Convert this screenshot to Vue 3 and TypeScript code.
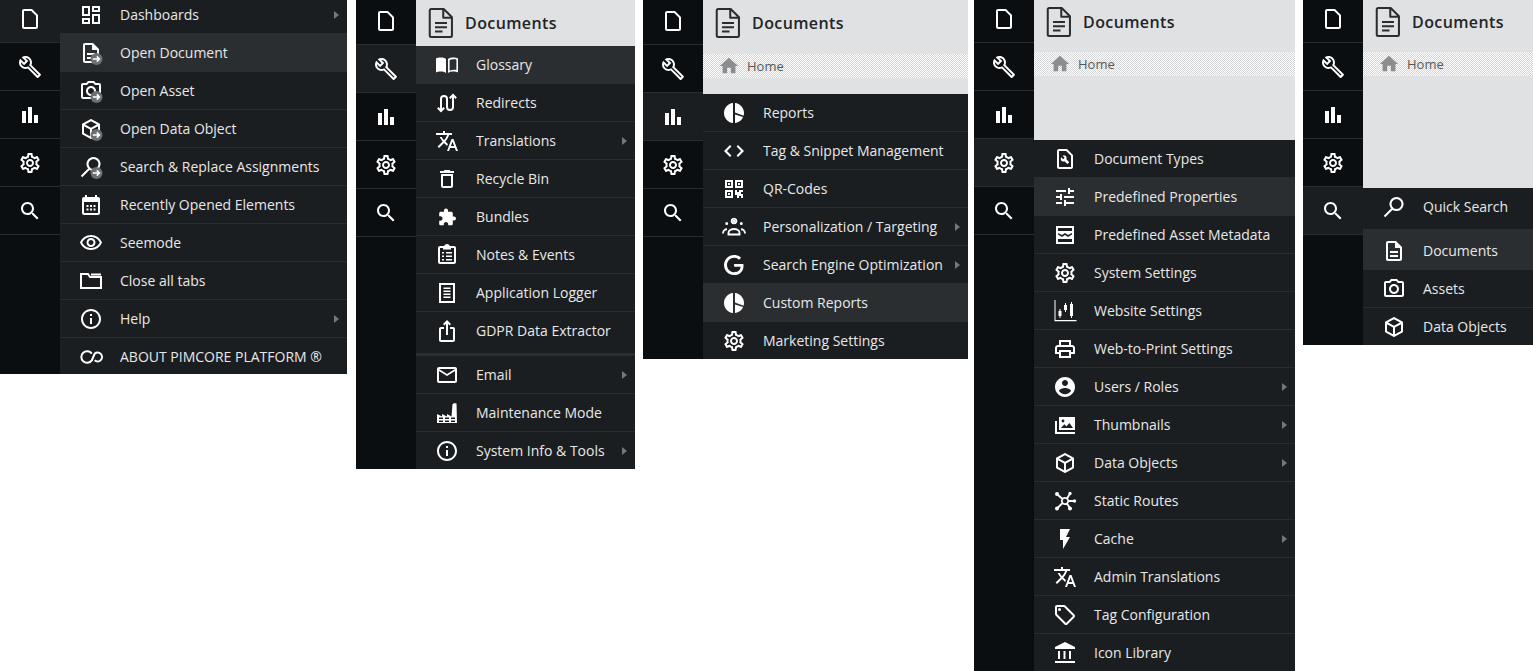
<script setup lang="ts">
interface Shape {
  fill?: string;
  line?: string;
  sw?: number;
}

interface Row {
  label: string;
  icon: string;
  arrow?: boolean;
  hot?: boolean;
  thick?: boolean;
  badge?: boolean;
}

interface Panel {
  id: number;
  active: number;
  head: 'none' | 'title' | 'crumb';
  rows: Row[];
}

const dot = (x: number, y: number, r: number) =>
  `M${x - r} ${y}a${r} ${r} 0 1 0 ${2 * r} 0a${r} ${r} 0 1 0 ${-2 * r} 0z`;

const cube =
  'M21 16.5c0 .38-.21.71-.53.88l-7.9 4.44c-.16.12-.36.18-.57.18s-.41-.06-.57-.18l-7.9-4.44A.991.991 0 013 16.5v-9c0-.38.21-.71.53-.88l7.9-4.44c.16-.12.36-.18.57-.18s.41.06.57.18l7.9 4.44c.32.17.53.5.53.88v9zM12 4.15L6.04 7.5 12 10.85l5.96-3.35L12 4.15zM5 15.91l6 3.38v-6.71L5 9.21v6.7zm14 0v-6.7l-6 3.37v6.71l6-3.38z';
const docLines =
  'M8 16h8v2H8zm0-4h8v2H8zm6-10H6c-1.1 0-2 .9-2 2v16c0 1.1.89 2 1.99 2H18c1.1 0 2-.9 2-2V8l-6-6zm4 18H6V4h7v5h5v11z';
const translate =
  'M12.87 15.07l-2.54-2.51.03-.03c1.74-1.94 2.98-4.17 3.71-6.53H17V4h-7V2H8v2H1v1.99h11.17C11.5 7.92 10.44 9.75 9 11.35 8.07 10.32 7.3 9.19 6.69 8h-2c.73 1.63 1.73 3.17 2.98 4.56l-5.09 5.02L4 19l5-5 3.11 3.11.76-2.04zM18.5 10h-2L12 22h2l1.12-3h4.75L21 22h2l-4.5-12zm-2.62 7l1.62-4.33L19.12 17h-3.24z';
const info =
  'M11 7h2v2h-2zm0 4h2v6h-2zm1-9C6.48 2 2 6.48 2 12s4.48 10 10 10 10-4.48 10-10S17.52 2 12 2zm0 18c-4.41 0-8-3.59-8-8s3.59-8 8-8 8 3.59 8 8-3.59 8-8 8z';
const pie =
  'M11 2v20c-5.07-.5-9-4.79-9-10s3.93-9.5 9-10zM13 2v9.4l8.6 3.3c.3-.9.4-1.8.4-2.7 0-5.2-4-9.5-9-10zM13 13.6V22c3.8-.4 6.9-2.9 8-6z';
const gear =
  'M19.43 12.98c.04-.32.07-.64.07-.98 0-.34-.03-.66-.07-.98l2.11-1.65c.19-.15.24-.42.12-.64l-2-3.46c-.09-.16-.26-.25-.44-.25-.06 0-.12.01-.17.03l-2.49 1c-.52-.4-1.08-.73-1.69-.98l-.38-2.65C14.46 2.18 14.25 2 14 2h-4c-.25 0-.46.18-.49.42l-.38 2.65c-.61.25-1.17.59-1.69.98l-2.49-1c-.06-.02-.12-.03-.18-.03-.17 0-.34.09-.43.25l-2 3.46c-.13.22-.07.49.12.64l2.11 1.65c-.04.32-.07.65-.07.98 0 .33.03.66.07.98l-2.11 1.65c-.19.15-.24.42-.12.64l2 3.46c.09.16.26.25.44.25.06 0 .12-.01.17-.03l2.49-1c.52.4 1.08.73 1.69.98l.38 2.65c.03.24.24.42.49.42h4c.25 0 .46-.18.49-.42l.38-2.65c.61-.25 1.17-.59 1.69-.98l2.49 1c.06.02.12.03.18.03.17 0 .34-.09.43-.25l2-3.46c.12-.22.07-.49-.12-.64l-2.11-1.65zm-1.98-1.71c.04.31.05.52.05.73 0 .21-.02.43-.05.73l-.14 1.13.89.7 1.08.84-.7 1.21-1.27-.51-1.04-.42-.9.68c-.43.32-.84.56-1.25.73l-1.06.43-.16 1.13-.2 1.35h-1.4l-.19-1.35-.16-1.13-1.06-.43c-.43-.18-.83-.41-1.23-.71l-.91-.7-1.06.43-1.27.51-.7-1.21 1.08-.84.89-.7-.14-1.13c-.03-.31-.05-.54-.05-.74s.02-.43.05-.73l.14-1.13-.89-.7-1.08-.84.7-1.21 1.27.51 1.04.42.9-.68c.43-.32.84-.56 1.25-.73l1.06-.43.16-1.13.2-1.35h1.39l.19 1.35.16 1.13 1.06.43c.43.18.83.41 1.23.71l.91.7 1.06-.43 1.27-.51.7 1.21-1.07.85-.89.7.14 1.13zM12 8c-2.21 0-4 1.79-4 4s1.79 4 4 4 4-1.79 4-4-1.79-4-4-4zm0 6c-1.1 0-2-.9-2-2s.9-2 2-2 2 .9 2 2-.9 2-2 2z';

const icons: Record<string, Shape> = {
  page: { fill: 'M13.17 4L18 8.83V20H6V4h7.17M14 2H6c-1.1 0-2 .9-2 2v16c0 1.1.9 2 2 2h12c1.1 0 2-.9 2-2V8l-6-6z' },
  wrench: {
    fill: 'M22.61 18.99l-9.08-9.08c.93-2.34.45-5.1-1.44-7C9.79.61 6.21.4 3.66 2.26L7.5 6.11 6.08 7.52 2.25 3.69C.39 6.23.6 9.82 2.9 12.11c1.86 1.86 4.57 2.35 6.89 1.48l9.11 9.11c.39.39 1.02.39 1.41 0l2.3-2.3c.4-.38.4-1.01 0-1.41zm-3 1.6l-9.46-9.46c-.61.45-1.29.72-2 .82-1.36.2-2.79-.21-3.83-1.25C3.37 9.76 2.93 8.5 3 7.26l3.09 3.09 4.24-4.24-3.09-3.09c1.24-.07 2.49.37 3.44 1.31 1.08 1.08 1.49 2.57 1.24 3.96-.12.71-.42 1.37-.88 1.96l9.45 9.45-.88.88z',
  },
  bars: { fill: 'M10 20h4V4h-4v16zm-6 0h4v-12H4v12zm12 0h4v-8h-4v8z' },
  gear: { fill: gear },
  search: {
    fill: 'M15.5 14h-.79l-.28-.27C15.41 12.59 16 11.11 16 9.5 16 5.91 13.09 3 9.5 3S3 5.91 3 9.5 5.91 16 9.5 16c1.61 0 3.09-.59 4.23-1.57l.27.28v.79l5 4.99L20.49 19l-4.99-5zm-6 0C7.01 14 5 11.99 5 9.5S7.01 5 9.5 5 14 7.01 14 9.5 11.99 14 9.5 14z',
  },
  dashboard: { fill: 'M19 5v2h-4V5h4M9 5v6H5V5h4m10 8v6h-4v-6h4M9 17v2H5v-2h4M21 3h-8v6h8V3zM11 3H3v10h8V3zm10 8h-8v10h8V11zm-10 4H3v6h8v-6z' },
  doc: { fill: docLines },
  camera: {
    fill: 'M20 4h-3.17L15 2H9L7.17 4H4c-1.1 0-2 .9-2 2v12c0 1.1.9 2 2 2h16c1.1 0 2-.9 2-2V6c0-1.1-.9-2-2-2zm0 14H4V6h4.05l1.83-2h4.24l1.83 2H20v12zM12 7c-2.76 0-5 2.24-5 5s2.24 5 5 5 5-2.24 5-5-2.24-5-5-5zm0 8c-1.65 0-3-1.35-3-3s1.35-3 3-3 3 1.35 3 3-1.35 3-3 3z',
  },
  cube: { fill: cube },
  lens: { line: 'M14.5 3a6 6 0 1 0 0.01 0zM10 14l-7.5 7.5', sw: 2 },
  calendar: {
    fill: 'M19 4h-1V2h-2v2H8V2H6v2H5c-1.1 0-2 .9-2 2v14c0 1.1.9 2 2 2h14c1.1 0 2-.9 2-2V6c0-1.1-.9-2-2-2zm0 16H5V9h14v11zM7.5 12h2v2h-2zm3.5 0h2v2h-2zm3.5 0h2v2h-2zm-7 3.5h2v2h-2zm3.5 0h2v2h-2zm3.5 0h2v2h-2z',
  },
  eye: {
    fill: 'M12 6c3.79 0 7.17 2.13 8.82 5.5C19.17 14.87 15.79 17 12 17s-7.17-2.13-8.82-5.5C4.83 8.13 8.21 6 12 6m0-2C7 4 2.73 7.11 1 11.5 2.73 15.89 7 19 12 19s9.27-3.11 11-7.5C21.27 7.11 17 4 12 4zm0 5c1.38 0 2.5 1.12 2.5 2.5S13.38 14 12 14s-2.5-1.12-2.5-2.5S10.62 9 12 9m0-2c-2.48 0-4.5 2.02-4.5 4.5S9.52 16 12 16s4.5-2.02 4.5-4.5S14.48 7 12 7z',
  },
  folder: { line: 'M2 5h7l2 3h11v11H2zM12 5.5h10', sw: 2 },
  info: { fill: info },
  loop: { line: 'M12.8 8.6A5.8 5.8 0 1 0 12.8 15.4L15.6 8.8A4.4 4.4 0 1 1 15.6 15.2', sw: 2 },
  book: {
    fill: 'M1 5.5c2.5-1.2 7-1.5 10 .5v14c-3-2-7.5-1.6-10-.5zM13 6c3-2 7.5-1.7 10-.5v14c-2.5-1.1-7-1.5-10 .5zM14.6 7v10.7c2.4-1.2 4.9-1.2 6.8-.7V6.6c-2-.6-4.8-.6-6.8.4z',
  },
  redirect: { line: 'M6 20V8a3 3 0 0 1 6 0v8a3 3 0 0 0 6 0V4M2.8 16.8L6 20l3.2-3.2M14.8 7.2L18 4l3.2 3.2', sw: 2 },
  translate: { fill: translate },
  trash: { fill: 'M6 19c0 1.1.9 2 2 2h8c1.1 0 2-.9 2-2V7H6v12zM8 9h8v10H8V9zm7.5-5l-1-1h-5l-1 1H5v2h14V4z' },
  puzzle: {
    fill: 'M19 11.5h-1.2V8.3c0-.9-.7-1.6-1.6-1.6H13V5.5C13 4.4 12.1 3.5 11 3.5S9 4.4 9 5.5v1.2H5.8c-.9 0-1.6.7-1.6 1.6v3h1.2c1.2 0 2.2 1 2.2 2.2s-1 2.2-2.2 2.2H4.2v3c0 .9.7 1.6 1.6 1.6h3v-1.2c0-1.2 1-2.2 2.2-2.2s2.2 1 2.2 2.2v1.2h3c.9 0 1.6-.7 1.6-1.6v-3.2H19c1.1 0 2-.9 2-2s-.9-2-2-2z',
  },
  clipboard: {
    fill: 'M19 3h-4.18C14.4 1.84 13.3 1 12 1s-2.4.84-2.82 2H5c-1.1 0-2 .9-2 2v14c0 1.1.9 2 2 2h14c1.1 0 2-.9 2-2V5c0-1.1-.9-2-2-2zm0 16H5V5h14v14zM8 5h8v1.6H8zM7 9h2v1.6H7zm4 0h6v1.6h-6zm-4 3.5h2v1.6H7zm4 0h6v1.6h-6zM7 16h2v1.6H7zm4 0h6v1.6h-6z',
  },
  logger: { fill: 'M4 2h16v20H4zM6 4v16h12V4zM8.5 6.5h7V8h-7zm0 3h7V11h-7zm0 3h7V14h-7zm0 3h7V17h-7z' },
  share: {
    fill: 'M16 5l-1.42 1.42-1.59-1.59V16h-1.98V4.83L9.42 6.42 8 5l4-4 4 4zm4 5v11c0 1.1-.9 2-2 2H6c-1.11 0-2-.9-2-2V10c0-1.11.89-2 2-2h3v2H6v11h12V10h-3V8h3c1.1 0 2 .89 2 2z',
  },
  mail: { fill: 'M20 4H4c-1.1 0-1.99.9-1.99 2L2 18c0 1.1.9 2 2 2h16c1.1 0 2-.9 2-2V6c0-1.1-.9-2-2-2zm0 14H4V8l8 5 8-5v10zm-8-7L4 6h16l-8 5z' },
  factory: {
    fill: 'M2 22v-9l5 2.6V13l5 2.6V13l4.5 2.4L17.5 3h1V2l3 .5L22 22zM4 16.5v1.6h4v-1.6zm6 0v1.6h4v-1.6zm6 0v1.6h4v-1.6zM4 19.5V21h4v-1.5zm6 0V21h4v-1.5zm6 0V21h4v-1.5z',
  },
  pie: { fill: pie },
  code: { fill: 'M9.4 16.6L5 12l4.4-4.6L8 6l-6 6 6 6 1.4-1.4zm5.2 0L19 12l-4.4-4.6L16 6l6 6-6 6-1.4-1.4z' },
  qr: {
    fill: 'M3 3h8v8H3zM5 5v4h4V5zM13 3h8v8h-8zM15 5v4h4V5zM3 13h8v8H3zM5 15v4h4v-4zM13 13h2v2h2v-2h4v2h-2v2h2v4h-2v-2h-2v2h-2v-3h-2zM6 6h2v2H6zM16 6h2v2h-2zM6 16h2v2H6z',
  },
  people: {
    fill: dot(12, 6, 1.6) + dot(4.7, 8.6, 1.5) + dot(19.3, 8.6, 1.5),
    line: 'M12 3.6a2.4 2.4 0 1 0 .01 0M6.5 19.5v-1.8c0-2.2 2.8-3.7 5.5-3.7s5.5 1.5 5.5 3.7v1.8zM1 18.5c0-2.6 2-4.2 4-4.2M23 18.5c0-2.6-2-4.2-4-4.2',
    sw: 1.9,
  },
  google: {
    fill: 'M21.35 11.1h-9.17v2.73h6.51c-.33 3.81-3.5 5.44-6.5 5.44C8.36 19.27 5 16.25 5 12c0-4.1 3.2-7.27 7.2-7.27 3.09 0 4.9 1.97 4.9 1.97L19 4.72S16.56 2 12.1 2C6.42 2 2.03 6.8 2.03 12c0 5.05 4.13 10 10.22 10 5.35 0 9.25-3.67 9.25-9.09 0-1.15-.15-1.81-.15-1.81z',
    line: 'M12.5 12.4h7.5c0 5-3.5 8.2-7.8 8.2-4.8 0-8.7-3.8-8.7-8.6s3.8-8.6 8.6-8.6c2.6 0 4.5 1.1 5.7 2.4',
    sw: 1.4,
  },
  doctype: {
    fill: 'M13.17 4L18 8.83V20H6V4h7.17M14 2H6c-1.1 0-2 .9-2 2v16c0 1.1.9 2 2 2h12c1.1 0 2-.9 2-2V8l-6-6zM8.2 10.2l2 2 1.4-1.4-2-2c1.6-.7 3.2-.2 3.8 1.1.4.8.3 1.7 0 2.4l2.8 2.9-1.9 1.9-2.8-2.9c-.8.4-1.7.4-2.5 0-1.2-.6-1.7-2.4-.8-4z',
  },
  tune: { fill: 'M3 17v2h6v-2H3zM3 5v2h10V5H3zm10 16v-2h8v-2h-8v-2h-2v6h2zM7 9v2H3v2h4v2h2V9H7zm14 4v-2H11v2h10zm-6-4h2V7h4V5h-4V3h-2v6z' },
  meta: {
    fill: 'M3 3h18v18H3zM5 5v3h14V5zM5 16v3h14v-3zM5 10v1.5l4 2.5 3-2 3 2 4-2.5V10l-4 2-3-2-3 2z',
  },
  candles: {
    fill: 'M1.5 1h1v20h21v1.2h-22zM6.5 10h1v2h1v5h-1v2h-1v-2h-1v-5h1zM12 4h1v2h1v5h-1v2h-1v-2h-1V6h1zM18 3h1v2h1v12h-1v2h-1v-2h-1V5h1z',
  },
  printer: {
    fill: 'M19 8h-1V3H6v5H5c-1.66 0-3 1.34-3 3v6h4v4h12v-4h4v-6c0-1.66-1.34-3-3-3zM8 5h8v3H8V5zm8 12v2H8v-4h8v2zm2-2v-2H6v2H4v-4c0-.55.45-1 1-1h14c.55 0 1 .45 1 1v4h-2z',
  },
  user: {
    fill: 'M12 2C6.48 2 2 6.48 2 12s4.48 10 10 10 10-4.48 10-10S17.52 2 12 2zm0 3c1.66 0 3 1.34 3 3s-1.34 3-3 3-3-1.34-3-3 1.34-3 3-3zm0 14.2c-2.5 0-4.71-1.28-6-3.22.03-1.99 4-3.08 6-3.08 1.99 0 5.97 1.09 6 3.08-1.29 1.94-3.5 3.22-6 3.22z',
  },
  photos: {
    fill: 'M6 4h16v13H6zM8 15h12l-3.6-5-3 3.4-2-2.2z' + dot(10, 8, 1.4) + 'M2 8h2v11h18v2H2z',
  },
  hub: {
    fill: dot(4, 5, 2) + dot(17, 4.5, 1.7) + dot(21.5, 12, 1.7) + dot(4, 19.5, 2) + dot(17, 19.5, 2),
    line: 'M12 8.8a3.2 3.2 0 1 0 .01 0M5 6l4.5 4M16.5 5.5L14 9.5M21 12h-6M5 18.5l4.5-4.5M16.5 18.5L14 14.5',
    sw: 1.8,
  },
  flash: { fill: 'M7 2v11h3v9l7-12h-4l4-8z' },
  tag: {
    fill: 'M21.41 11.58l-9-9C12.05 2.22 11.55 2 11 2H4c-1.1 0-2 .9-2 2v7c0 .55.22 1.05.59 1.42l9 9c.36.36.86.58 1.41.58s1.05-.22 1.41-.59l7-7c.37-.36.59-.86.59-1.41s-.23-1.06-.59-1.42zM13 20.01L4 11V4h7v-.01l9 8.99-7 7.02z' + dot(6.5, 6.5, 1.5),
  },
  bank: { fill: 'M5 10v8h2v-8zm5.5 0v8h2v-8zM2 20h20v2H2zm14-10v8h2v-8zM12 1L2 6v2h20V6z' },
};

const sideIcons = ['page', 'wrench', 'bars', 'gear', 'search'];

const panels: Panel[] = [
  {
    id: 1,
    active: 0,
    head: 'none',
    rows: [
      { label: 'Dashboards', icon: 'dashboard', arrow: true },
      { label: 'Open Document', icon: 'doc', hot: true, badge: true },
      { label: 'Open Asset', icon: 'camera', badge: true },
      { label: 'Open Data Object', icon: 'cube', badge: true },
      { label: 'Search & Replace Assignments', icon: 'lens', badge: true },
      { label: 'Recently Opened Elements', icon: 'calendar' },
      { label: 'Seemode', icon: 'eye' },
      { label: 'Close all tabs', icon: 'folder' },
      { label: 'Help', icon: 'info', arrow: true },
      { label: 'ABOUT PIMCORE PLATFORM ®', icon: 'loop' },
    ],
  },
  {
    id: 2,
    active: 1,
    head: 'title',
    rows: [
      { label: 'Glossary', icon: 'book', hot: true },
      { label: 'Redirects', icon: 'redirect' },
      { label: 'Translations', icon: 'translate', arrow: true },
      { label: 'Recycle Bin', icon: 'trash' },
      { label: 'Bundles', icon: 'puzzle' },
      { label: 'Notes & Events', icon: 'clipboard' },
      { label: 'Application Logger', icon: 'logger' },
      { label: 'GDPR Data Extractor', icon: 'share' },
      { label: 'Email', icon: 'mail', arrow: true, thick: true },
      { label: 'Maintenance Mode', icon: 'factory' },
      { label: 'System Info & Tools', icon: 'info', arrow: true },
    ],
  },
  {
    id: 3,
    active: 2,
    head: 'crumb',
    rows: [
      { label: 'Reports', icon: 'pie' },
      { label: 'Tag & Snippet Management', icon: 'code' },
      { label: 'QR-Codes', icon: 'qr' },
      { label: 'Personalization / Targeting', icon: 'people', arrow: true },
      { label: 'Search Engine Optimization', icon: 'google', arrow: true },
      { label: 'Custom Reports', icon: 'pie', hot: true },
      { label: 'Marketing Settings', icon: 'gear' },
    ],
  },
  {
    id: 4,
    active: 3,
    head: 'crumb',
    rows: [
      { label: 'Document Types', icon: 'doctype' },
      { label: 'Predefined Properties', icon: 'tune', hot: true },
      { label: 'Predefined Asset Metadata', icon: 'meta' },
      { label: 'System Settings', icon: 'gear' },
      { label: 'Website Settings', icon: 'candles' },
      { label: 'Web-to-Print Settings', icon: 'printer' },
      { label: 'Users / Roles', icon: 'user', arrow: true },
      { label: 'Thumbnails', icon: 'photos', arrow: true },
      { label: 'Data Objects', icon: 'cube', arrow: true },
      { label: 'Static Routes', icon: 'hub' },
      { label: 'Cache', icon: 'flash', arrow: true },
      { label: 'Admin Translations', icon: 'translate' },
      { label: 'Tag Configuration', icon: 'tag' },
      { label: 'Icon Library', icon: 'bank' },
    ],
  },
  {
    id: 5,
    active: 4,
    head: 'crumb',
    rows: [
      { label: 'Quick Search', icon: 'lens' },
      { label: 'Documents', icon: 'doc', hot: true, thick: true },
      { label: 'Assets', icon: 'camera' },
      { label: 'Data Objects', icon: 'cube' },
    ],
  },
];
</script>

<template>
  <div class="sheet">
    <section v-for="panel in panels" :key="panel.id" class="panel" :class="`panel-${panel.id}`">
      <nav class="side">
        <div
          v-for="(name, i) in sideIcons"
          :key="name"
          class="side-item"
          :class="{ active: i === panel.active }"
        >
          <svg class="ico" viewBox="0 0 24 24"><path fill="#fff" fill-rule="evenodd" :d="icons[name].fill" /></svg>
        </div>
      </nav>

      <div class="main">
        <header v-if="panel.head !== 'none'" class="head">
          <div class="title">
            <svg class="title-ico" viewBox="0 0 24 24">
              <path
                fill="none"
                stroke="#2b2d30"
                stroke-width="1.35"
                stroke-linejoin="round"
                d="M5.5 2.7h8.3l5.500 5.500v12.100c0 .6-.4 1-1 1H5.500c-.6 0-1-.4-1-1V3.700c0-.6.4-1 1-1zM13.500 2.700v5.800h5.800M8 12h8M8 14.800h8M8 17.600h5"
              />
            </svg>
            <span>Documents</span>
          </div>
          <div v-if="panel.head === 'crumb'" class="crumb">
            <svg class="home" viewBox="0 0 24 24"><path fill="#8b8d8f" d="M10 20v-6h4v6h5v-8h3L12 3 2 12h3v8z" /></svg>
            <span>Home</span>
          </div>
        </header>

        <ul class="menu">
          <li
            v-for="row in panel.rows"
            :key="row.label"
            class="row"
            :class="{ hot: row.hot, thick: row.thick }"
          >
            <svg class="ico" viewBox="0 0 24 24">
              <path v-if="icons[row.icon].fill" fill="#fff" fill-rule="evenodd" :d="icons[row.icon].fill" />
              <path
                v-if="icons[row.icon].line"
                fill="none"
                stroke="#fff"
                :stroke-width="icons[row.icon].sw"
                :d="icons[row.icon].line"
              />
              <g v-if="row.badge">
                <circle cx="17.5" cy="18" r="6" fill="#6d7072" />
                <path d="M13.8 18h6.4M17.8 15.4l2.6 2.6-2.6 2.6" fill="none" stroke="#fff" stroke-width="1.6" />
              </g>
            </svg>
            <span class="label">{{ row.label }}</span>
            <i v-if="row.arrow" class="arrow"></i>
          </li>
        </ul>
      </div>
    </section>
  </div>
</template>

<style scoped>
.sheet {
  display: flex;
  align-items: flex-start;
  width: 1533px;
  height: 671px;
  overflow: hidden;
  background: #fff;
  font-family: 'Open Sans', sans-serif;
}

.panel {
  display: flex;
  flex: none;
  overflow: hidden;
  background: #1b1e21;
}

.panel-1 { width: 347px; height: 374px; }
.panel-2 { width: 279px; height: 469px; margin-left: 9px; }
.panel-3 { width: 325px; height: 359px; margin-left: 8px; }
.panel-4 { width: 321px; height: 671px; margin-left: 6px; }
.panel-5 { width: 230px; height: 345px; margin-left: 8px; }

.side {
  flex: none;
  width: 60px;
  align-self: stretch;
  margin-top: -5px;
  background-color: #0a0e11;
  background-image: radial-gradient(#1d2124 0.5px, transparent 0.7px);
  background-size: 6px 6px;
}

.panel-2 .side,
.panel-3 .side {
  margin-top: -3px;
}

.side-item {
  display: flex;
  align-items: center;
  justify-content: center;
  height: 48px;
  box-sizing: border-box;
  border-bottom: 1px solid #2a2d30;
}

.side-item.active {
  background: #1b1e21;
}

.main {
  flex: 1;
  min-width: 0;
}

.ico {
  flex: none;
  width: 24px;
  height: 24px;
  overflow: visible;
}

.head {
  background: #e0e1e3;
}

.panel-3 .head { padding-bottom: 16px; }
.panel-4 .head { padding-bottom: 64px; }
.panel-5 .head { padding-bottom: 112px; }

.title {
  display: flex;
  align-items: center;
  height: 44px;
  padding-left: 10px;
  color: #222427;
  font-size: 16px;
  font-weight: 600;
  letter-spacing: 0.4px;
}

.panel-2 .title,
.panel-3 .title {
  height: 46px;
}

.title-ico {
  flex: none;
  width: 36px;
  height: 36px;
  margin: 0 6px 0 -3px;
}

.crumb {
  display: flex;
  align-items: center;
  height: 24px;
  margin-top: 8px;
  padding-left: 15px;
  color: #55585a;
  font-size: 13px;
  background: repeating-conic-gradient(#fff 0 25%, #d4d5d7 0 50%) 0 0 / 2px 2px;
}

.home {
  width: 22px;
  height: 22px;
  margin-right: 7px;
}

.menu {
  list-style: none;
  margin: 0;
  padding: 0;
}

.panel-1 .menu {
  margin-top: -4px;
}

.row {
  display: flex;
  align-items: center;
  height: 38px;
  box-sizing: border-box;
  padding: 0 8px 0 19px;
  border-bottom: 1px solid #2a2d30;
  color: #e8e8e8;
  font-size: 14px;
}

.row:has(+ .thick) {
  border-bottom-color: transparent;
}

.row.hot {
  background: #2b2e31;
  border-bottom-color: #2b2e31;
}

.row.thick {
  height: 41px;
  margin-top: 3px;
  border-top: 3px solid #2a2d30;
}

.panel-5 .row.thick {
  border-top-color: #2b2e31;
}

.label {
  flex: 1;
  margin-left: 17px;
  white-space: nowrap;
}

.arrow {
  flex: none;
  width: 0;
  height: 0;
  border-top: 4px solid transparent;
  border-bottom: 4px solid transparent;
  border-left: 5px solid #74777a;
}
</style>
